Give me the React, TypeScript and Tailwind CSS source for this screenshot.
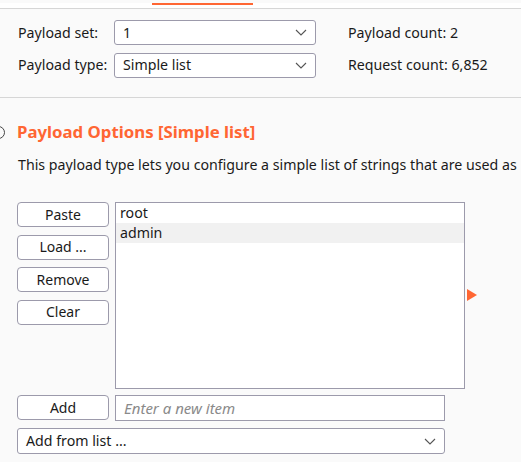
import React from "react";

const Chevron = () => (
  <svg width="12" height="7" viewBox="0 0 12 7" className="text-[#555]">
    <path d="M1 1l5 5 5-5" fill="none" stroke="currentColor" strokeWidth="1.1" />
  </svg>
);

const SelectBox: React.FC<{ value: string; className?: string }> = ({ value, className }) => (
  <div
    className={`h-[25px] flex items-center justify-between bg-white border border-[#9c9aab] rounded-[3px] pl-[8px] pr-[8px] ${className ?? ""}`}
  >
    <span>{value}</span>
    <Chevron />
  </div>
);

const Btn: React.FC<{ label: string }> = ({ label }) => (
  <button className="w-[92px] h-[25px] bg-white border border-[#9c9aab] rounded-[4px] flex items-center justify-center text-[14px] text-[#1a1a1a]">
    {label}
  </button>
);

export default function App() {
  const items = ["root", "admin"];

  return (
    <div className="w-[521px] h-[462px] overflow-hidden bg-[#fafafa] text-[14.2px] leading-[20px] text-[#1a1a1a] font-['Noto_Sans',sans-serif]">
      {/* tab strip */}
      <div className="h-[6px] bg-white border-b border-[#d6d6d6]">
        <div className="ml-[152px] w-[101px] h-[2px] mt-[3px] bg-[#ff6633]" />
      </div>

      {/* payload set */}
      <div className="border-b border-[#d6d6d6] pt-[11px] h-[89px] pl-[18px] flex flex-col gap-[7.5px]">
        <div className="flex items-center h-[25px]">
          <span className="w-[96px]">Payload set:</span>
          <SelectBox value="1" className="w-[202px]" />
          <span className="ml-[32px]">Payload count: 2</span>
        </div>
        <div className="flex items-center h-[25px]">
          <span className="w-[96px]">Payload type:</span>
          <SelectBox value="Simple list" className="w-[202px]" />
          <span className="ml-[32px]">Request count: 6,852</span>
        </div>
      </div>

      {/* options */}
      <div className="pt-[24px]">
        <div className="flex items-center gap-[12px] h-[20px]">
          <div className="ml-[-8px] w-[13px] h-[13px] rounded-full border-[1.5px] border-[#444]" />
          <h2 className="text-[16.8px] font-bold text-[#ff6633] leading-[20px]">Payload Options [Simple list]</h2>
        </div>
        <p className="pl-[18px] mt-[13px] whitespace-nowrap">
          This payload type lets you configure a simple list of strings that are used as
        </p>

        <div className="flex pl-[17px] mt-[27px] gap-[6px] items-start">
          <div className="flex flex-col gap-[7.5px]">
            <Btn label="Paste" />
            <Btn label="Load ..." />
            <Btn label="Remove" />
            <Btn label="Clear" />
          </div>
          <div className="w-[350px] h-[187px] bg-white border border-[#9c9aab]">
            {items.map((it, i) => (
              <div key={it} className={`h-[20px] leading-[20px] pl-[4px] ${i === 1 ? "bg-[#f1f1f1]" : ""}`}>
                {it}
              </div>
            ))}
          </div>
          <div className="mt-[87px] ml-[-4px] w-0 h-0 border-y-[6.5px] border-y-transparent border-l-[10px] border-l-[#ff6633]" />
        </div>

        <div className="flex pl-[17px] mt-[6px] gap-[6px]">
          <Btn label="Add" />
          <div className="w-[330px] h-[26px] bg-white border border-[#9c9aab] flex items-center pl-[8px] italic text-[15px] text-[#8a8a8a]">
            Enter a new item
          </div>
        </div>

        <div className="pl-[17px] mt-[7px]">
          <SelectBox value="Add from list ..." className="w-[428px] h-[26px]" />
        </div>
      </div>
    </div>
  );
}
